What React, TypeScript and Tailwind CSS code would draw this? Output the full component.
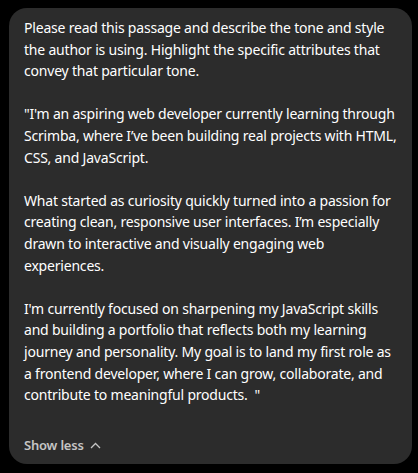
export default function App() {
  const prompt = `Please read this passage and describe the tone and style the author is using. Highlight the specific attributes that convey that particular tone.

"I'm an aspiring web developer currently learning through Scrimba, where I’ve been building real projects with HTML, CSS, and JavaScript.

What started as curiosity quickly turned into a passion for creating clean, responsive user interfaces. I’m especially drawn to interactive and visually engaging web experiences.

I'm currently focused on sharpening my JavaScript skills and building a portfolio that reflects both my learning journey and personality. My goal is to land my first role as a frontend developer, where I can grow, collaborate, and contribute to meaningful products.  "`

  return (
    <div className="min-h-[473px] bg-black pt-2 pl-[9px] pr-[6px] font-['Noto_Sans',sans-serif]">
      <div className="rounded-[18px] bg-[#2c2c2c] pl-[15px] pr-[12px] pt-[9px] pb-[9px]">
        <p className="whitespace-pre-wrap text-[14px] leading-[21.6px] tracking-[-0.2px] text-white">{prompt}</p>
        <button className="mt-[31px] flex h-[18px] items-center gap-[6px] text-[13px] font-semibold tracking-[-0.2px] text-[#c5c5c5]">
          Show less
          <svg width="11" height="7" viewBox="0 0 11 7" fill="none" stroke="currentColor" strokeWidth="1.3">
            <path d="M1 6 5.5 1.5 10 6" />
          </svg>
        </button>
      </div>
    </div>
  )
}
